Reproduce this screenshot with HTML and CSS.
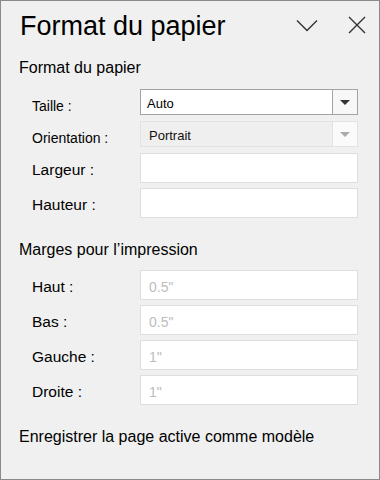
FILE: index.html
```html
<!DOCTYPE html>
<html lang="fr">
<head>
<meta charset="utf-8">
<link rel="stylesheet" href="styles.css">
</head>
<body>
<div class="panel">
  <div class="header">
    <div class="title">Format du papier</div>
    <div class="actions">
      <svg class="icon chevron" width="22" height="14" viewBox="0 0 22 14"><path d="M1 1.5 L11 11.5 L21 1.5" fill="none" stroke="#333" stroke-width="1.4"/></svg>
      <svg class="icon close" width="18" height="18" viewBox="0 0 18 18"><path d="M1 1 L17 17 M17 1 L1 17" fill="none" stroke="#333" stroke-width="1.4"/></svg>
    </div>
  </div>

  <div class="section-title first">Format du papier</div>
  <div class="form form-first">
    <div class="row short">
      <div class="label small">Taille :</div>
      <div class="select">
        <div class="select-value">Auto</div>
        <div class="select-btn"><span class="tri"></span></div>
      </div>
    </div>
    <div class="row short">
      <div class="label small">Orientation :</div>
      <div class="select disabled">
        <div class="select-value">Portrait</div>
        <div class="select-btn"><span class="tri"></span></div>
      </div>
    </div>
    <div class="row">
      <div class="label">Largeur :</div>
      <div class="input"></div>
    </div>
    <div class="row">
      <div class="label">Hauteur :</div>
      <div class="input"></div>
    </div>
  </div>

  <div class="section-title second">Marges pour l’impression</div>
  <div class="form">
    <div class="row">
      <div class="label">Haut :</div>
      <div class="input"><span class="ph">0.5"</span></div>
    </div>
    <div class="row">
      <div class="label">Bas :</div>
      <div class="input"><span class="ph">0.5"</span></div>
    </div>
    <div class="row">
      <div class="label">Gauche :</div>
      <div class="input"><span class="ph">1"</span></div>
    </div>
    <div class="row">
      <div class="label">Droite :</div>
      <div class="input"><span class="ph">1"</span></div>
    </div>
  </div>

  <div class="link">Enregistrer la page active comme modèle</div>
</div>
</body>
</html>
```

FILE: styles.css
```css
* { box-sizing: border-box; }
html, body { margin: 0; padding: 0; }
body {
  font-family: "Liberation Sans", Arial, sans-serif;
  color: #000;
  background: #f0f0f0;
}
.panel {
  width: 380px;
  height: 480px;
  border: 1px solid #8a8a8a;
  background: #f0f0f0;
  overflow: hidden;
}
.header {
  display: flex;
  justify-content: space-between;
  align-items: flex-start;
  padding: 9px 0 0 19px;
  height: 56px;
}
.title {
  font-size: 27px;
  line-height: 32px;
}
.actions {
  display: flex;
  align-items: flex-start;
  padding-top: 6px;
}
.chevron { margin-top: 3px; margin-right: 30px; display: block; }
.close { margin-right: 13px; display: block; }

.section-title {
  font-size: 16px;
  line-height: 21px;
  padding-left: 18px;
}
.section-title.second { margin-top: 21px; }

.form {
  display: flex;
  flex-direction: column;
  gap: 5px;
  padding-left: 31px;
  margin-top: 10px;
}
.form.form-first { margin-top: 11px; }
.row {
  display: grid;
  grid-template-columns: 108px 218px;
  height: 30px;
}
.row.short { height: 26px; margin-bottom: 1px; }
.label {
  font-size: 15.5px;
  line-height: 18px;
  padding-top: 7.5px;
}
.label.small {
  font-size: 14px;
  line-height: 16px;
  padding-top: 8.5px;
}

.select {
  display: flex;
  border: 1px solid #a3a3a3;
  background: #fff;
}
.select-value {
  flex: 1;
  font-size: 13px;
  line-height: 16px;
  padding: 6px 0 0 6px;
}
.select-btn {
  width: 25px;
  border-left: 1px solid #a3a3a3;
  background: #f7f7f7;
  display: flex;
  align-items: center;
  justify-content: center;
}
.tri {
  width: 0;
  height: 0;
  border-left: 5px solid transparent;
  border-right: 5px solid transparent;
  border-top: 5px solid #333;
}
.select.disabled {
  border-color: #e2e2e2;
  background: #efefef;
}
.select.disabled .select-value { padding-left: 8px; color: #111; }
.select.disabled .select-btn {
  border-left-color: #e2e2e2;
  background: #fafafa;
}
.select.disabled .tri { border-top-color: #ababab; }

.input {
  background: #fff;
  border: 1px solid #dedede;
  font-size: 14px;
  line-height: 16px;
  padding: 8px 0 0 8px;
}
.ph { color: #bdbdbd; }

.link {
  font-size: 16px;
  line-height: 21px;
  padding-left: 18px;
  margin-top: 21px;
}
```
